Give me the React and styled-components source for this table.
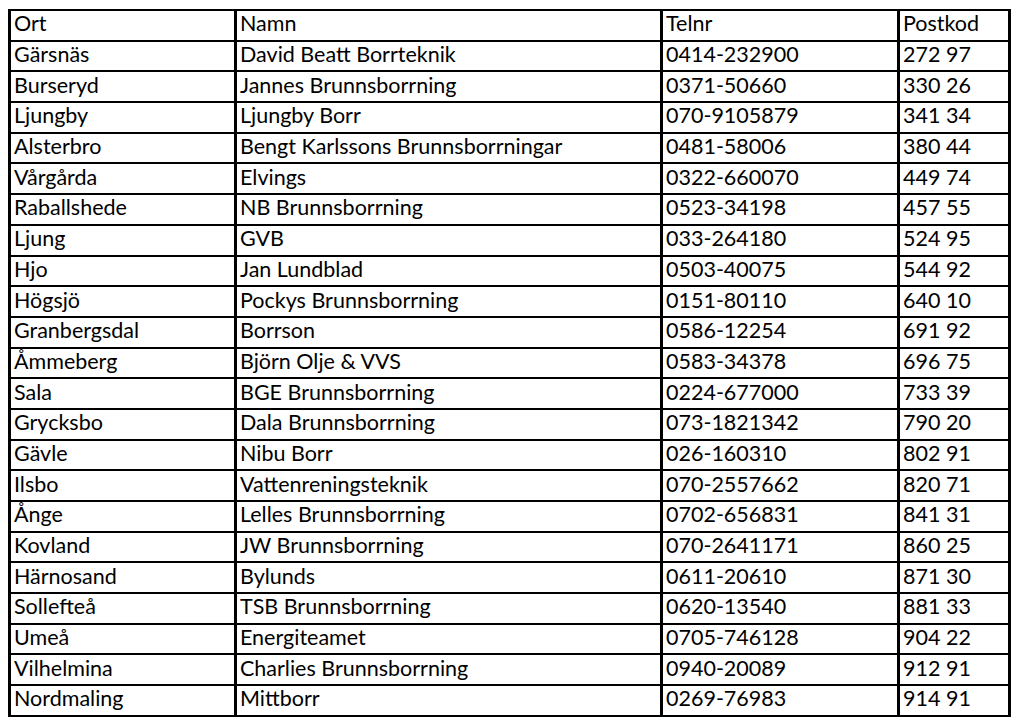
import React from 'react';
import styled, { createGlobalStyle } from 'styled-components';

const GlobalStyle = createGlobalStyle`
    body {
        margin: 9px 0 0 8px;
        background: #ffffff;
        font-family: Lato, "Open Sans", sans-serif;
    }
`;

const Table = styled.table`
    border-collapse: collapse;
    table-layout: fixed;
    width: 1000px;
    color: #000;
    font-size: 21.5px;
`;

const Cell = styled.td`
    border: 2px solid #000;
    border-left-width: 3px;
    border-right-width: 3px;
    padding: 0 3px 3px;
    height: 25.7px;
    line-height: 25px;
    white-space: nowrap;
    overflow: hidden;
    text-align: left;
    font-weight: normal;
`;

const columns = [
    { title: 'Ort', width: 226 },
    { title: 'Namn', width: 426 },
    { title: 'Telnr', width: 237 },
    { title: 'Postkod', width: 111 },
];

const rows = [
    ['Gärsnäs', 'David Beatt Borrteknik', '0414-232900', '272 97'],
    ['Burseryd', 'Jannes Brunnsborrning', '0371-50660', '330 26'],
    ['Ljungby', 'Ljungby Borr', '070-9105879', '341 34'],
    ['Alsterbro', 'Bengt Karlssons Brunnsborrningar', '0481-58006', '380 44'],
    ['Vårgårda', 'Elvings', '0322-660070', '449 74'],
    ['Raballshede', 'NB Brunnsborrning', '0523-34198', '457 55'],
    ['Ljung', 'GVB', '033-264180', '524 95'],
    ['Hjo', 'Jan Lundblad', '0503-40075', '544 92'],
    ['Högsjö', 'Pockys Brunnsborrning', '0151-80110', '640 10'],
    ['Granbergsdal', 'Borrson', '0586-12254', '691 92'],
    ['Åmmeberg', 'Björn Olje & VVS', '0583-34378', '696 75'],
    ['Sala', 'BGE Brunnsborrning', '0224-677000', '733 39'],
    ['Grycksbo', 'Dala Brunnsborrning', '073-1821342', '790 20'],
    ['Gävle', 'Nibu Borr', '026-160310', '802 91'],
    ['Ilsbo', 'Vattenreningsteknik', '070-2557662', '820 71'],
    ['Ånge', 'Lelles Brunnsborrning', '0702-656831', '841 31'],
    ['Kovland', 'JW Brunnsborrning', '070-2641171', '860 25'],
    ['Härnosand', 'Bylunds', '0611-20610', '871 30'],
    ['Sollefteå', 'TSB Brunnsborrning', '0620-13540', '881 33'],
    ['Umeå', 'Energiteamet', '0705-746128', '904 22'],
    ['Vilhelmina', 'Charlies Brunnsborrning', '0940-20089', '912 91'],
    ['Nordmaling', 'Mittborr', '0269-76983', '914 91'],
];

const App = () => (
    <>
        <GlobalStyle />
        <Table>
            <colgroup>
                {columns.map(c => (
                    <col key={c.title} style={{ width: c.width }} />
                ))}
            </colgroup>
            <thead>
                <tr>
                    {columns.map(c => (
                        <Cell as="th" key={c.title}>{c.title}</Cell>
                    ))}
                </tr>
            </thead>
            <tbody>
                {rows.map(row => (
                    <tr key={row[0]}>
                        {row.map((value, i) => (
                            <Cell key={i}>{value}</Cell>
                        ))}
                    </tr>
                ))}
            </tbody>
        </Table>
    </>
);

export default App;
